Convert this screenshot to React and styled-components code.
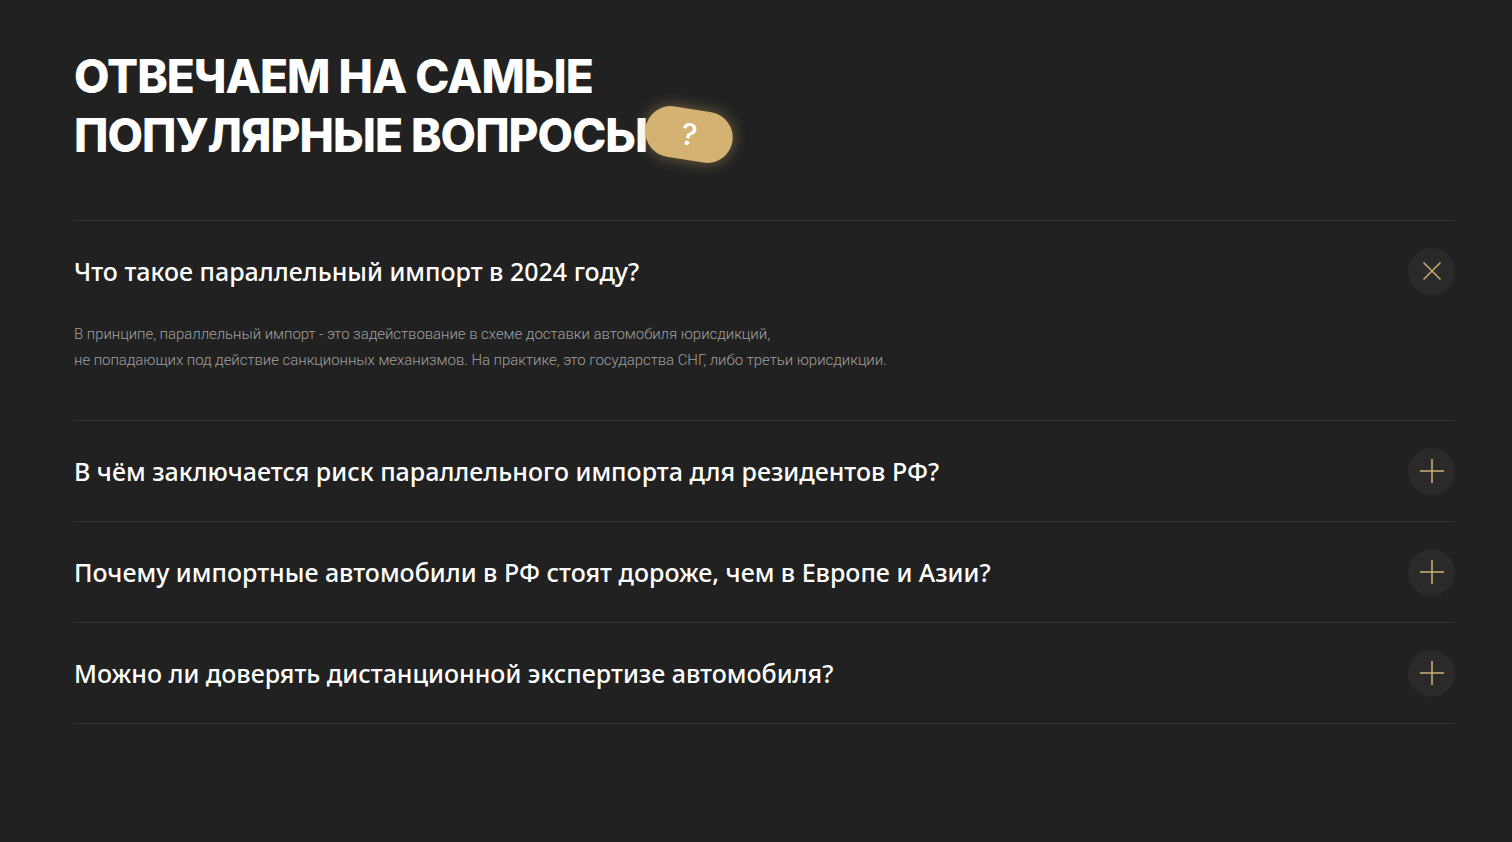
import React, { useState } from "react";
import styled, { createGlobalStyle } from "styled-components";

const faq = [
  {
    q: "Что такое параллельный импорт в 2024 году?",
    a: [
      "В принципе, параллельный импорт - это задействование в схеме доставки автомобиля юрисдикций,",
      "не попадающих под действие санкционных механизмов. На практике, это государства СНГ, либо третьи юрисдикции.",
    ],
  },
  { q: "В чём заключается риск параллельного импорта для резидентов РФ?", a: [] },
  { q: "Почему импортные автомобили в РФ стоят дороже, чем в Европе и Азии?", a: [] },
  { q: "Можно ли доверять дистанционной экспертизе автомобиля?", a: [] },
];

const App = () => {
  const [open, setOpen] = useState(0);
  return (
    <>
      <GlobalStyle />
      <Section>
        <Title>
          Отвечаем на самые
          <br />
          <Last>
            популярные вопросы
            <Pill>?</Pill>
          </Last>
        </Title>
        <List>
          {faq.map((item, i) => (
            <Item key={i}>
              <Head onClick={() => setOpen(open === i ? -1 : i)}>
                <Question>{item.q}</Question>
                <Toggle>
                  <svg width="24" height="24" viewBox="0 0 24 24">
                    <g
                      stroke="#c7aa6c"
                      strokeWidth="1.6"
                      transform={open === i ? "rotate(45 12 12)" : undefined}
                    >
                      <line x1="12" y1="0" x2="12" y2="24" />
                      <line x1="0" y1="12" x2="24" y2="12" />
                    </g>
                  </svg>
                </Toggle>
              </Head>
              {open === i && (
                <Answer>
                  {item.a.map((line, k) => (
                    <div key={k}>{line}</div>
                  ))}
                </Answer>
              )}
            </Item>
          ))}
        </List>
      </Section>
    </>
  );
};

const GlobalStyle = createGlobalStyle`
  body {
    margin: 0;
    background: #212121;
    font-family: Inter, "Noto Sans", sans-serif;
  }
`;

const Section = styled.div`
  min-height: 842px;
  box-sizing: border-box;
  padding: 47px 57px 0 74px;
  background: #212121;
`;

const Title = styled.h2`
  margin: 0;
  color: #fff;
  font-family: Inter, sans-serif;
  font-weight: 800;
  font-size: 46px;
  line-height: 59px;
  text-transform: uppercase;
  letter-spacing: -1px;
`;

const Last = styled.span`
  position: relative;
`;

const Pill = styled.span`
  position: absolute;
  left: calc(100% - 2px);
  top: 2px;
  width: 88px;
  height: 51px;
  border-radius: 26px;
  background: #d4b271;
  box-shadow: 0 0 16px rgba(212, 178, 113, 0.45);
  transform: rotate(9deg);
  color: #fff;
  font-size: 30px;
  font-weight: 500;
  line-height: 51px;
  letter-spacing: 0;
  text-align: center;
  text-transform: none;
`;

const List = styled.div`
  margin-top: 55px;
  border-top: 1px solid #343434;
`;

const Item = styled.div`
  border-bottom: 1px solid #343434;
`;

const Head = styled.div`
  display: flex;
  align-items: center;
  justify-content: space-between;
  height: 100px;
  cursor: pointer;
`;

const Question = styled.div`
  color: #fff;
  font-family: "Noto Sans", sans-serif;
  font-size: 25px;
  font-weight: 500;
  letter-spacing: 0;
`;

const Toggle = styled.div`
  width: 47px;
  height: 47px;
  border-radius: 50%;
  background: #2a2a2a;
  display: flex;
  align-items: center;
  justify-content: center;
`;

const Answer = styled.div`
  padding: 0 0 47px;
  color: #a0a0a0;
  font-family: Roboto, sans-serif;
  font-weight: 300;
  font-size: 15px;
  line-height: 26px;
  letter-spacing: -0.05px;
`;

export default App;
